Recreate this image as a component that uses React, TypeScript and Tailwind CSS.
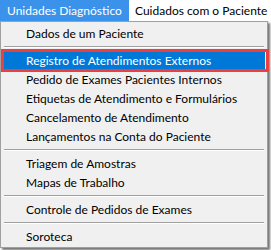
const groups: string[][] = [
  ['Dados de um Paciente'],
  [
    'Registro de Atendimentos Externos',
    'Pedido de Exames Pacientes Internos',
    'Etiquetas de Atendimento e Formulários',
    'Cancelamento de Atendimento',
    'Lançamentos na Conta do Paciente',
  ],
  ['Triagem de Amostras', 'Mapas de Trabalho'],
  ['Controle de Pedidos de Exames'],
  ['Soroteca'],
];

const active = 'Registro de Atendimentos Externos';

const Separator = () => (
  <div className="flex h-[8px] items-center px-[3px]">
    <div className="h-[2px] w-full border-t border-b border-t-[#a0a0a0] border-b-white" />
  </div>
);

const Item = ({ label }: { label: string }) => {
  const selected = label === active;
  return (
    <div
      className={
        selected
          ? 'relative mx-[2px] flex h-[19px] items-center bg-[#0078d7] pl-[23px] text-white'
          : 'relative mx-[2px] flex h-[19px] items-center pl-[23px] text-black'
      }
    >
      {label}
      {selected && (
        <div className="pointer-events-none absolute -top-[2px] -bottom-[2px] -left-[2px] -right-[4px] border-[3px] border-[#ec4040]" />
      )}
    </div>
  );
};

export default function App() {
  return (
    <div className="relative h-[250px] w-[271px] overflow-hidden bg-white font-['Lato',sans-serif] text-[12px] leading-none">
      <div className="flex h-[21px] items-center whitespace-nowrap">
        <div className="flex h-full w-[129px] items-center bg-[#3a92ea] pl-[7px] pt-[1px] text-white">Unidades Diagnóstico</div>
        <div className="pl-[6px] pt-[1px] text-black">Cuidados com o Paciente</div>
      </div>
      <div className="w-[268px] whitespace-nowrap border border-[#a0a0a0] bg-[#f0f0f0] pt-[2px] pb-[1px] shadow-[2px_2px_2px_rgba(0,0,0,0.55)]">
        {groups.map((g, i) => (
          <div key={i}>
            {i > 0 && <Separator />}
            {g.map((label) => (
              <Item key={label} label={label} />
            ))}
          </div>
        ))}
      </div>
    </div>
  );
}
